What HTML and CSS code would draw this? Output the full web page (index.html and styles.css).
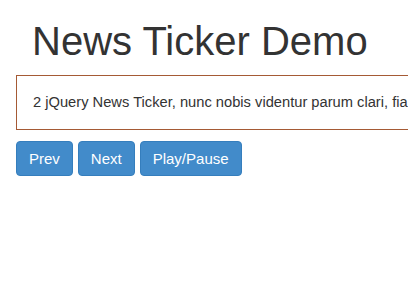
FILE: index.html
```html
<!DOCTYPE html>
<html lang="en">
<head>
  <meta charset="UTF-8">
  <title>News Ticker Demo</title>
  <link rel="stylesheet" href="styles.css">
</head>
<body>
  <div class="page">
    <h1 class="title">News Ticker Demo</h1>

    <div class="ticker">
      <ul>
        <li>2 jQuery News Ticker, nunc nobis videntur parum clari, fiant sollemnes in futurum.</li>
      </ul>
    </div>

    <div class="controls">
      <button class="btn">Prev</button>
      <button class="btn">Next</button>
      <button class="btn">Play/Pause</button>
    </div>
  </div>
</body>
</html>
```

FILE: styles.css
```css
html, body {
  margin: 0;
  overflow: hidden;
}

body {
  font-family: "Liberation Sans", Arial, sans-serif;
  font-size: 15px;
  line-height: 21px;
  color: #333;
  background: #fff;
}

ul, li {
  list-style: none;
  margin: 0;
  padding: 0;
}

.page {
  padding: 0 16px;
}

.title {
  font-size: 40px;
  font-weight: 400;
  line-height: 1.1;
  margin: 19px 0 12px 16px;
}

.ticker {
  width: 640px;
  border: 1px solid #a55a35;
  padding: 16px;
  white-space: nowrap;
  overflow: hidden;
}

.ticker li {
  font-size: 14.7px;
}

.controls {
  display: flex;
  gap: 5px;
  margin-top: 11px;
}

.btn {
  font-family: inherit;
  font-size: 15px;
  line-height: 21px;
  padding: 6px 12px;
  color: #fff;
  background: #428bca;
  border: 1px solid #357ebd;
  border-radius: 4px;
  cursor: pointer;
}
```
